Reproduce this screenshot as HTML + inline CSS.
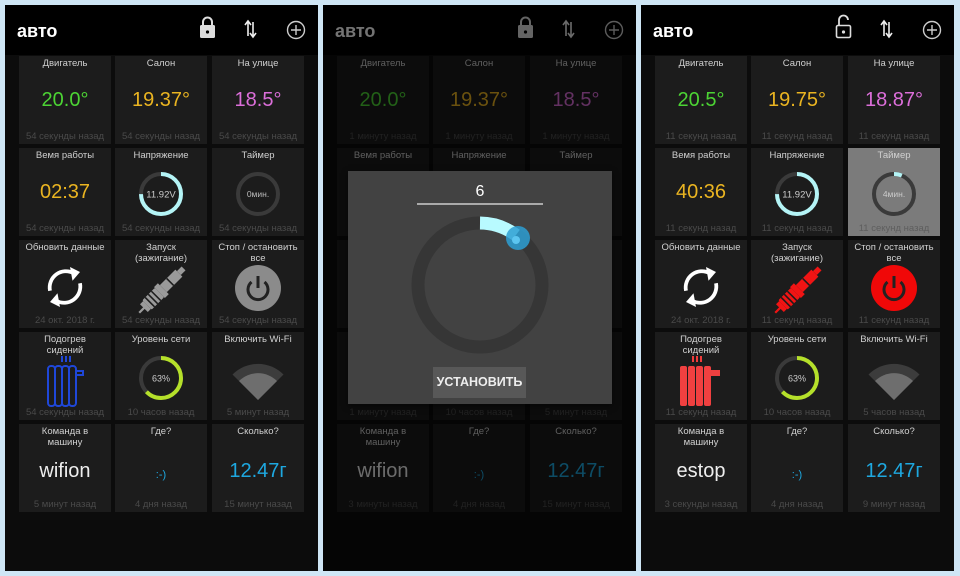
<!DOCTYPE html>
<html><head><meta charset="utf-8">
<style>
*{margin:0;padding:0;box-sizing:border-box}
body{width:960px;height:576px;background:#cfe6f5;position:relative;overflow:hidden;font-family:"Liberation Sans","DejaVu Sans",sans-serif}
.p{position:absolute;top:5px;width:313px;height:566px;background:#0c0c0c;overflow:hidden}
.hd{position:absolute;left:0;top:0;width:313px;height:50px;background:#000}
.ttl{position:absolute;left:12px;top:16px;color:#fff;font-weight:bold;font-size:18px}
.t{position:absolute;width:92px;height:88px;background:#1c1c1c;text-align:center}
.t .n{position:absolute;left:0;right:0;top:2px;font-size:9.5px;color:#d0d0d0;line-height:11px}
.t .f{position:absolute;left:0;right:0;top:75px;font-size:9.5px;color:#4a4a4a;white-space:nowrap}
.t .v{position:absolute;left:0;right:0;top:33px;font-size:20px;line-height:22px}
.t svg{position:absolute;left:0;top:0}
.c1{left:14px}.c2{left:110px}.c3{left:207px}
.r1{top:51px}.r2{top:143px}.r3{top:235px}.r4{top:327px}.r5{top:419px}
.ov{position:absolute;left:0;top:0;width:313px;height:566px;background:rgba(0,0,0,.55)}
</style></head><body>

<!-- PANEL 1 -->
<div class="p" style="left:5px">
 <div class="hd"><div class="ttl">авто</div>
  <svg width="313" height="50" style="position:absolute;left:0;top:0">
   <path d="M198 20 v-3 a4.5 4.5 0 0 1 9 0 v3" fill="none" stroke="#ddd" stroke-width="2"/>
   <rect x="195" y="20" width="15" height="13" rx="1.5" fill="#ddd"/><circle cx="202.5" cy="27" r="1.6" fill="#000"/>
   <path d="M243 31 V17 M240 20 l3-4 3 4 M248 17 V31 M245 28 l3 4 3-4" stroke="#eee" stroke-width="1.6" fill="none"/>
   <circle cx="291" cy="25" r="8.5" fill="none" stroke="#ccc" stroke-width="1.4"/><path d="M286 25h10M291 20v10" stroke="#ccc" stroke-width="1.4"/>
  </svg></div>
 <div class="t c1 r1"><div class="n">Двигатель</div><div class="v" style="color:#4cd434">20.0°</div><div class="f">54 секунды назад</div></div>
 <div class="t c2 r1"><div class="n">Салон</div><div class="v" style="color:#eab421">19.37°</div><div class="f">54 секунды назад</div></div>
 <div class="t c3 r1"><div class="n">На улице</div><div class="v" style="color:#db6ed9">18.5°</div><div class="f">54 секунды назад</div></div>
 <div class="t c1 r2"><div class="n">Вемя работы</div><div class="v" style="color:#eab421">02:37</div><div class="f">54 секунды назад</div></div>
 <div class="t c2 r2"><div class="n">Напряжение</div>
  <svg width="92" height="88"><circle cx="46" cy="46" r="20" fill="none" stroke="#3a3a3a" stroke-width="4"/><circle cx="46" cy="46" r="20" fill="none" stroke="#b4f4f6" stroke-width="4" stroke-dasharray="94 200" transform="rotate(-90 46 46)"/><text x="46" y="49.5" fill="#ccc" font-size="9.5" text-anchor="middle">11.92V</text></svg>
  <div class="f">54 секунды назад</div></div>
 <div class="t c3 r2"><div class="n">Таймер</div>
  <svg width="92" height="88"><circle cx="46" cy="46" r="20" fill="none" stroke="#3a3a3a" stroke-width="4"/><text x="46" y="49" fill="#bbb" font-size="8.5" text-anchor="middle">0мин.</text></svg>
  <div class="f">54 секунды назад</div></div>
 <div class="t c1 r3"><div class="n">Обновить данные</div>
  <svg width="92" height="88"><g transform="translate(46 47) scale(1.25) translate(-46 -47)"><g fill="none" stroke="#fff" stroke-width="3"><path d="M34 50 A13 13 0 0 1 53 36"/><path d="M58 44 A13 13 0 0 1 39 58"/></g><path d="M50 31 l8 4 -6 7z M42 63 l-8 -4 6 -7z" fill="#fff"/></g></svg>
  <div class="f">24 окт. 2018 г.</div></div>
 <div class="t c2 r3"><div class="n">Запуск<br>(зажигание)</div>
  <svg width="92" height="88"><g transform="rotate(-45 46 51) translate(46 51) scale(1.1) translate(-46 -50)" fill="#9a9a9a"><rect x="18" y="49" width="7" height="2"/><rect x="24" y="45" width="4" height="10"/><rect x="28" y="44" width="16" height="12" rx="1"/><rect x="44" y="43" width="5" height="14"/><rect x="49" y="45.5" width="20" height="9"/><rect x="69" y="47.5" width="6" height="5"/><g fill="#1c1c1c"><rect x="31" y="44" width="1.4" height="12"/><rect x="35" y="44" width="1.4" height="12"/><rect x="39" y="44" width="1.4" height="12"/><rect x="57" y="45.5" width="1.4" height="9"/></g></g></svg>
  <div class="f">54 секунды назад</div></div>
 <div class="t c3 r3"><div class="n">Стоп / остановить<br>все</div>
  <svg width="92" height="88"><circle cx="46" cy="48" r="23" fill="#8b8b8b"/><path d="M39.5 42 A10 10 0 1 0 52.5 42" fill="none" stroke="#222" stroke-width="3"/><path d="M46 36 V48" stroke="#222" stroke-width="3"/></svg>
  <div class="f">54 секунды назад</div></div>
 <div class="t c1 r4"><div class="n">Подогрев<br>сидений</div>
  <svg width="92" height="88"><g stroke="#1f47d8" stroke-width="2" fill="none"><path d="M43 24v6M47 24v6M51 24v6"/><rect x="29" y="34" width="7" height="40" rx="3"/><rect x="36" y="34" width="7" height="40" rx="3"/><rect x="43" y="34" width="7" height="40" rx="3"/><rect x="50" y="34" width="7" height="40" rx="3"/><path d="M57 39h7v4h-7"/></g></svg>
  <div class="f">54 секунды назад</div></div>
 <div class="t c2 r4"><div class="n">Уровень сети</div>
  <svg width="92" height="88"><circle cx="46" cy="46" r="20" fill="none" stroke="#3a3a3a" stroke-width="4"/><circle cx="46" cy="46" r="20" fill="none" stroke="#b5e02a" stroke-width="4" stroke-dasharray="79 200" transform="rotate(-90 46 46)"/><text x="46" y="49.5" fill="#ccc" font-size="9" text-anchor="middle">63%</text></svg>
  <div class="f">10 часов назад</div></div>
 <div class="t c3 r4"><div class="n">Включить Wi-Fi</div>
  <svg width="92" height="88"><path d="M46 68 L20.5 42.5 A36 36 0 0 1 71.5 42.5Z" fill="#3c3c3c"/><path d="M46 68 L27 49 A27 27 0 0 1 65 49Z" fill="#6e6e6e"/></svg>
  <div class="f">5 минут назад</div></div>
 <div class="t c1 r5"><div class="n">Команда в<br>машину</div><div class="v" style="color:#eee;top:36px">wifion</div><div class="f">5 минут назад</div></div>
 <div class="t c2 r5"><div class="n">Где?</div><div class="v" style="color:#1ea8e0;font-size:11px;top:40px">:-)</div><div class="f">4 дня назад</div></div>
 <div class="t c3 r5"><div class="n">Сколько?</div><div class="v" style="color:#1ea8e0;top:36px">12.47г</div><div class="f">15 минут назад</div></div>
</div>

<!-- PANEL 2 -->
<div class="p" style="left:323px">
 <div class="hd"><div class="ttl">авто</div>
  <svg width="313" height="50" style="position:absolute;left:0;top:0">
   <path d="M198 20 v-3 a4.5 4.5 0 0 1 9 0 v3" fill="none" stroke="#ddd" stroke-width="2"/>
   <rect x="195" y="20" width="15" height="13" rx="1.5" fill="#ddd"/><circle cx="202.5" cy="27" r="1.6" fill="#000"/>
   <path d="M243 31 V17 M240 20 l3-4 3 4 M248 17 V31 M245 28 l3 4 3-4" stroke="#eee" stroke-width="1.6" fill="none"/>
   <circle cx="291" cy="25" r="8.5" fill="none" stroke="#ccc" stroke-width="1.4"/><path d="M286 25h10M291 20v10" stroke="#ccc" stroke-width="1.4"/>
  </svg></div>
 <div class="t c1 r1"><div class="n">Двигатель</div><div class="v" style="color:#4cd434">20.0°</div><div class="f">1 минуту назад</div></div>
 <div class="t c2 r1"><div class="n">Салон</div><div class="v" style="color:#eab421">19.37°</div><div class="f">1 минуту назад</div></div>
 <div class="t c3 r1"><div class="n">На улице</div><div class="v" style="color:#db6ed9">18.5°</div><div class="f">1 минуту назад</div></div>
 <div class="t c1 r2"><div class="n">Вемя работы</div></div>
 <div class="t c2 r2"><div class="n">Напряжение</div></div>
 <div class="t c3 r2"><div class="n">Таймер</div></div>
 <div class="t c1 r3"></div><div class="t c2 r3"></div><div class="t c3 r3"></div>
 <div class="t c1 r4"><div class="f">1 минуту назад</div></div>
 <div class="t c2 r4"><div class="f">10 часов назад</div></div>
 <div class="t c3 r4"><div class="f">5 минут назад</div></div>
 <div class="t c1 r5"><div class="n">Команда в<br>машину</div><div class="v" style="color:#eee;top:36px">wifion</div><div class="f">3 минуты назад</div></div>
 <div class="t c2 r5"><div class="n">Где?</div><div class="v" style="color:#1ea8e0;font-size:11px;top:40px">:-)</div><div class="f">4 дня назад</div></div>
 <div class="t c3 r5"><div class="n">Сколько?</div><div class="v" style="color:#1ea8e0;top:36px">12.47г</div><div class="f">15 минут назад</div></div>
 <div class="ov"></div>
 <div style="position:absolute;left:25px;top:166px;width:264px;height:233px;background:#424242;box-shadow:0 2px 6px rgba(0,0,0,.5)">
  <div style="position:absolute;left:0;right:0;top:12px;text-align:center;color:#fff;font-size:16px">6</div>
  <div style="position:absolute;left:69px;top:32px;width:126px;height:1.5px;background:#aaa"></div>
  <svg width="264" height="233" style="position:absolute;left:0;top:0">
   <circle cx="132" cy="114" r="62" fill="none" stroke="#363636" stroke-width="13"/>
   <path d="M132 52 A62 62 0 0 1 168 64" fill="none" stroke="#b8faff" stroke-width="13"/>
   <circle cx="170" cy="67" r="12" fill="#2d9fd4" opacity=".85"/><circle cx="168" cy="69" r="4" fill="#5cc5f0"/>
  </svg>
  <div style="position:absolute;left:85px;top:196px;width:93px;height:31px;background:#585858;color:#eee;font-weight:bold;font-size:12.5px;line-height:31px;text-align:center">УСТАНОВИТЬ</div>
 </div>
</div>

<!-- PANEL 3 -->
<div class="p" style="left:641px">
 <div class="hd"><div class="ttl">авто</div>
  <svg width="313" height="50" style="position:absolute;left:0;top:0">
   <path d="M198 20 v-5 a4.5 4.5 0 0 1 9 0" fill="none" stroke="#ddd" stroke-width="1.8"/>
   <rect x="195.5" y="20.5" width="14" height="12" rx="1.5" fill="none" stroke="#ddd" stroke-width="1.6"/><circle cx="202.5" cy="27" r="1.6" fill="#ddd"/>
   <path d="M243 31 V17 M240 20 l3-4 3 4 M248 17 V31 M245 28 l3 4 3-4" stroke="#eee" stroke-width="1.6" fill="none"/>
   <circle cx="291" cy="25" r="8.5" fill="none" stroke="#ccc" stroke-width="1.4"/><path d="M286 25h10M291 20v10" stroke="#ccc" stroke-width="1.4"/>
  </svg></div>
 <div class="t c1 r1"><div class="n">Двигатель</div><div class="v" style="color:#4cd434">20.5°</div><div class="f">11 секунд назад</div></div>
 <div class="t c2 r1"><div class="n">Салон</div><div class="v" style="color:#eab421">19.75°</div><div class="f">11 секунд назад</div></div>
 <div class="t c3 r1"><div class="n">На улице</div><div class="v" style="color:#db6ed9">18.87°</div><div class="f">11 секунд назад</div></div>
 <div class="t c1 r2"><div class="n">Вемя работы</div><div class="v" style="color:#eab421">40:36</div><div class="f">11 секунд назад</div></div>
 <div class="t c2 r2"><div class="n">Напряжение</div>
  <svg width="92" height="88"><circle cx="46" cy="46" r="20" fill="none" stroke="#3a3a3a" stroke-width="4"/><circle cx="46" cy="46" r="20" fill="none" stroke="#b4f4f6" stroke-width="4" stroke-dasharray="94 200" transform="rotate(-90 46 46)"/><text x="46" y="49.5" fill="#ccc" font-size="9.5" text-anchor="middle">11.92V</text></svg>
  <div class="f">11 секунд назад</div></div>
 <div class="t c3 r2" style="background:#7b7b7b"><div class="n">Таймер</div>
  <svg width="92" height="88"><circle cx="46" cy="46" r="20" fill="none" stroke="#3a3a3a" stroke-width="4"/><circle cx="46" cy="46" r="20" fill="none" stroke="#b4f4f6" stroke-width="4" stroke-dasharray="8 200" transform="rotate(-90 46 46)"/><text x="46" y="49" fill="#ccc" font-size="8.5" text-anchor="middle">4мин.</text></svg>
  <div class="f" style="color:#5e5e5e">11 секунд назад</div></div>
 <div class="t c1 r3"><div class="n">Обновить данные</div>
  <svg width="92" height="88"><g transform="translate(46 47) scale(1.25) translate(-46 -47)"><g fill="none" stroke="#fff" stroke-width="3"><path d="M34 50 A13 13 0 0 1 53 36"/><path d="M58 44 A13 13 0 0 1 39 58"/></g><path d="M50 31 l8 4 -6 7z M42 63 l-8 -4 6 -7z" fill="#fff"/></g></svg>
  <div class="f">24 окт. 2018 г.</div></div>
 <div class="t c2 r3"><div class="n">Запуск<br>(зажигание)</div>
  <svg width="92" height="88"><g transform="rotate(-45 46 51) translate(46 51) scale(1.1) translate(-46 -50)" fill="#f01414"><rect x="18" y="49" width="7" height="2"/><rect x="24" y="45" width="4" height="10"/><rect x="28" y="44" width="16" height="12" rx="1"/><rect x="44" y="43" width="5" height="14"/><rect x="49" y="45.5" width="20" height="9"/><rect x="69" y="47.5" width="6" height="5"/><g fill="#1c1c1c"><rect x="31" y="44" width="1.4" height="12"/><rect x="35" y="44" width="1.4" height="12"/><rect x="39" y="44" width="1.4" height="12"/><rect x="57" y="45.5" width="1.4" height="9"/></g></g></svg>
  <div class="f">11 секунд назад</div></div>
 <div class="t c3 r3"><div class="n">Стоп / остановить<br>все</div>
  <svg width="92" height="88"><circle cx="46" cy="48" r="23" fill="#f00808"/><path d="M39.5 42 A10 10 0 1 0 52.5 42" fill="none" stroke="#222" stroke-width="3"/><path d="M46 36 V48" stroke="#222" stroke-width="3"/></svg>
  <div class="f">11 секунд назад</div></div>
 <div class="t c1 r4"><div class="n">Подогрев<br>сидений</div>
  <svg width="92" height="88"><g stroke="#f03c3c" stroke-width="2"><path d="M38 24v6M42 24v6M46 24v6"/></g><g fill="#f04040"><rect x="25" y="34" width="7" height="40" rx="2"/><rect x="33" y="34" width="7" height="40" rx="2"/><rect x="41" y="34" width="7" height="40" rx="2"/><rect x="49" y="34" width="7" height="40" rx="2"/><rect x="55" y="38" width="10" height="6"/></g></svg>
  <div class="f">11 секунд назад</div></div>
 <div class="t c2 r4"><div class="n">Уровень сети</div>
  <svg width="92" height="88"><circle cx="46" cy="46" r="20" fill="none" stroke="#3a3a3a" stroke-width="4"/><circle cx="46" cy="46" r="20" fill="none" stroke="#b5e02a" stroke-width="4" stroke-dasharray="79 200" transform="rotate(-90 46 46)"/><text x="46" y="49.5" fill="#ccc" font-size="9" text-anchor="middle">63%</text></svg>
  <div class="f">10 часов назад</div></div>
 <div class="t c3 r4"><div class="n">Включить Wi-Fi</div>
  <svg width="92" height="88"><path d="M46 68 L20.5 42.5 A36 36 0 0 1 71.5 42.5Z" fill="#3c3c3c"/><path d="M46 68 L27 49 A27 27 0 0 1 65 49Z" fill="#6e6e6e"/></svg>
  <div class="f">5 часов назад</div></div>
 <div class="t c1 r5"><div class="n">Команда в<br>машину</div><div class="v" style="color:#eee;top:36px">estop</div><div class="f">3 секунды назад</div></div>
 <div class="t c2 r5"><div class="n">Где?</div><div class="v" style="color:#1ea8e0;font-size:11px;top:40px">:-)</div><div class="f">4 дня назад</div></div>
 <div class="t c3 r5"><div class="n">Сколько?</div><div class="v" style="color:#1ea8e0;top:36px">12.47г</div><div class="f">9 минут назад</div></div>
</div>
</body></html>
